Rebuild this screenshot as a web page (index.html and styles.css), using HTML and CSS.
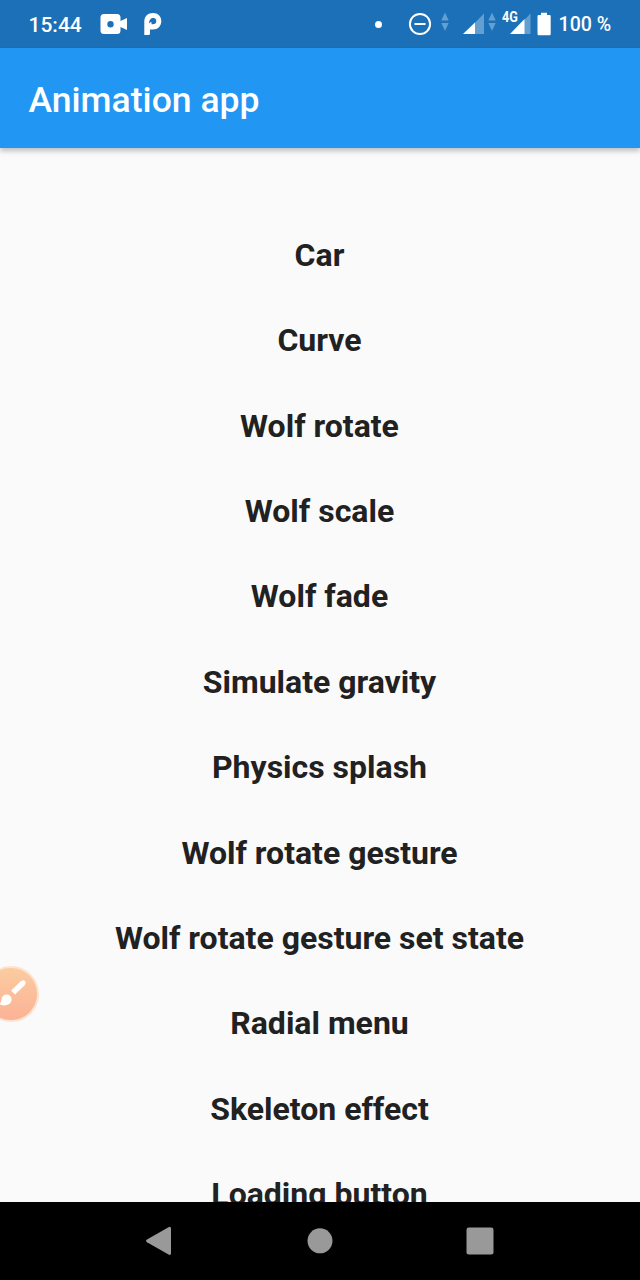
FILE: index.html
```html
<!DOCTYPE html>
<html lang="en">
<head>
<meta charset="utf-8">
<title>Animation app</title>
<link rel="stylesheet" href="styles.css">
</head>
<body>
<div class="screen">
  <div class="status-bar">
    <span class="clock">15:44</span>
    <svg class="icon-video" width="28" height="22" viewBox="0 0 28 22"><path fill="#fff" fill-rule="evenodd" d="M4 1H17Q20.500 1 20.500 4.500V8L27 5V17L20.500 14V17.500Q20.500 21 17 21H4Q.5 21 .5 17.500V4.500Q.5 1 4 1ZM10.500 8A3.200 3.200 0 1 0 10.500 14.400A3.200 3.200 0 1 0 10.500 8Z"/></svg>
    <svg class="icon-p" width="18" height="22" viewBox="0 0 18 22"><path fill="#fff" fill-rule="evenodd" d="M.3 22V8.500C.3 3.300 4 0 9 0C14 0 17.300 3.500 17.300 8C17.300 13 13.800 16.500 9 16.500H6V20.500Q6 22 4.500 22ZM5 10.500C5.300 6.500 7 5 9.300 5C11.200 5 12.300 6.200 12.300 8C12.300 10 11 11.300 9 11.300H7.500V9L6 9.500Z"/></svg>
    <span class="dot"></span>
    <svg class="icon-dnd" width="24" height="24" viewBox="0 0 24 24" fill="none" stroke="#fff" stroke-width="2"><circle cx="12" cy="12" r="10.100"/><path d="M6.500 12H17.500"/></svg>
    <svg class="arrows arrows-one" width="8" height="20" viewBox="0 0 8 20"><path d="M4 .5L7.700 8.500H.3ZM.3 11H7.700L4 19Z"/></svg>
    <svg class="signal signal-one" width="22" height="22" viewBox="0 0 22 22"><path fill="#649fd1" d="M21 .5V21H1Z"/><path fill="#fff" d="M12 9.500V21H0Z"/></svg>
    <svg class="arrows arrows-two" width="8" height="20" viewBox="0 0 8 20"><path d="M4 .5L7.700 8.500H.3ZM.3 11H7.700L4 19Z"/></svg>
    <div class="network"><span class="network-type">4G</span><svg width="22" height="22" viewBox="0 0 22 22"><path fill="#649fd1" d="M20.500 .5V21H1Z"/><path fill="#fff" d="M14.500 6V21H0Z"/></svg></div>
    <svg class="battery" width="14" height="24" viewBox="0 0 14 24"><path fill="#fff" d="M4 .7H10V3H12.500Q13.700 3 13.700 4.200V22Q13.700 23.200 12.500 23.200H1.700Q.5 23.200 .5 22V4.200Q.5 3 1.700 3H4Z"/></svg>
    <span class="percent">100 %</span>
  </div>
  <header class="app-bar"><h1 class="title">Animation app</h1></header>
  <main class="content">
    <ul class="menu">
      <li class="item">Car</li>
      <li class="item">Curve</li>
      <li class="item">Wolf rotate</li>
      <li class="item">Wolf scale</li>
      <li class="item">Wolf fade</li>
      <li class="item">Simulate gravity</li>
      <li class="item">Physics splash</li>
      <li class="item">Wolf rotate gesture</li>
      <li class="item">Wolf rotate gesture set state</li>
      <li class="item">Radial menu</li>
      <li class="item">Skeleton effect</li>
      <li class="item">Loading button</li>
    </ul>
  </main>
  <nav class="nav-bar">
    <svg width="160" height="78" viewBox="0 0 160 78" fill="#999"><path d="M88.500 25.200Q91 24 91 26.500V51.200Q91 53.800 88.500 52.600L67 40.200Q65 38.900 67 37.600Z"/></svg>
    <svg width="160" height="78" viewBox="0 0 160 78" fill="#999"><circle cx="80" cy="38.800" r="12.500"/></svg>
    <svg width="160" height="78" viewBox="0 0 160 78" fill="#999"><rect x="66.500" y="25.500" width="27" height="27" rx="2.200"/></svg>
  </nav>
  <div class="paint-button">
    <svg width="32" height="32" viewBox="0 0 32 32"><path d="M15 15.500L25 6" stroke="#fff" stroke-width="5.500"/><path d="M24 7L25.200 5.900" stroke="#fff" stroke-width="5" stroke-linecap="round"/><path fill="#fff" d="M5.500 18.500C9 16 14 18.500 13.600 23C13 28 6 30 1 27C4.500 25 2.500 21 5.500 18.500Z"/></svg>
  </div>
</div>
</body>
</html>
```
FILE: styles.css
```css
* { box-sizing: border-box; }
body { margin: 0; font-family: Roboto, sans-serif; }
svg { display: block; flex: none; }
.screen {
  position: relative;
  display: flex;
  flex-direction: column;
  width: 640px;
  height: 1280px;
  overflow: hidden;
  background: #fafafa;
}
.status-bar {
  display: flex;
  align-items: center;
  flex: none;
  height: 48px;
  padding-left: 28.500px;
  background: #1b70b7;
  color: #fff;
  font-size: 21px;
  font-weight: 500;
  white-space: nowrap;
}
.clock { width: 71.500px; padding-top: 2px; }
.icon-p { margin-left: 16px; }
.dot { flex: none; width: 7px; height: 7px; margin-left: 213px; border-radius: 50%; background: #fff; }
.icon-dnd { margin-left: 25.500px; }
.arrows { fill: #649fd1; margin-bottom: 4px; }
.arrows-one { margin-left: 9px; }
.signal-one { margin-left: 14px; }
.arrows-two { margin-left: 3px; }
.network { position: relative; margin-left: 14px; }
.network-type {
  position: absolute;
  left: -8px;
  top: -3px;
  font-size: 15px;
  line-height: 15px;
  font-weight: 700;
  transform: scaleX(.84);
  transform-origin: left;
}
.battery { margin-left: 5px; }
.percent { margin-left: 8px; padding-top: 1px; font-size: 19.600px; }
.app-bar {
  display: flex;
  align-items: center;
  flex: none;
  height: 99.600px;
  padding: 4px 28.500px 0;
  background: #2196f3;
  box-shadow: 0 3px 5px rgba(0, 0, 0, .24);
  z-index: 1;
}
.title { margin: 0; color: #fff; font-size: 35.560px; font-weight: 500; letter-spacing: 0; }
.content { flex: 1; min-height: 0; overflow: hidden; padding-top: 65.300px; }
.menu { margin: 0; padding: 0; list-style: none; }
.item {
  height: 85.390px;
  padding-right: 1px;
  line-height: 85.390px;
  color: #212121;
  text-align: center;
  font-size: 32px;
  font-weight: 700;
}
.nav-bar { display: flex; justify-content: center; flex: none; height: 78px; background: #000; }
.paint-button {
  position: absolute;
  left: -17px;
  top: 966px;
  width: 56px;
  height: 56px;
  padding: 9px 0 0 13px;
  border: 2px solid #fde3cd;
  border-radius: 50%;
  background: linear-gradient(#fbcca0, #fcb296);
}
```
